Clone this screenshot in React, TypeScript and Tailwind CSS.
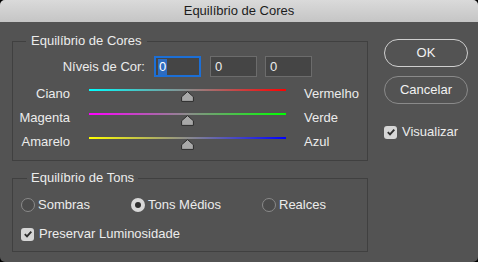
import React from "react";

const font = { fontFamily: '"Liberation Sans", Arial, sans-serif' };

const rows = [
  { left: "Ciano", right: "Vermelho", grad: "bg-[linear-gradient(to_right,#00ffff,#8c8c8c_50%,#ff0000)]" },
  { left: "Magenta", right: "Verde", grad: "bg-[linear-gradient(to_right,#ff00ff,#8c8c8c_50%,#00ff00)]" },
  { left: "Amarelo", right: "Azul", grad: "bg-[linear-gradient(to_right,#ffff00,#8c8c8c_50%,#0000ff)]" },
];

function Thumb() {
  return (
    <svg width="13" height="11" viewBox="0 0 13 11" className="block">
      <path d="M6.5 0.6 L12.4 5.8 V10.4 H0.6 V5.8 Z" fill="#a8a8a8" stroke="#2b2b2b" strokeWidth="1" strokeLinejoin="round" />
    </svg>
  );
}

function Check() {
  return (
    <span className="flex h-[13px] w-[13px] shrink-0 items-center justify-center rounded-[3px] bg-[#d6d6d6]">
      <svg width="10" height="10" viewBox="0 0 10 10">
        <path d="M1.8 5.2 L4 7.4 L8.3 2.6" fill="none" stroke="#2e2e2e" strokeWidth="1.9" />
      </svg>
    </span>
  );
}

function Radio({ on, label }: { on?: boolean; label: string }) {
  return (
    <div className="flex items-center gap-[3px]">
      {on ? (
        <span className="flex h-[14px] w-[14px] items-center justify-center rounded-full bg-[#d8d8d8]">
          <span className="h-[6px] w-[6px] rounded-full bg-[#2e2e2e]" />
        </span>
      ) : (
        <span className="h-[14px] w-[14px] rounded-full border border-[#8a8a8a] bg-[#4b4b4b]" />
      )}
      <span>{label}</span>
    </div>
  );
}

export default function App() {
  return (
    <div className="h-[262px] w-[478px] bg-black text-[13px] leading-[16px] text-[#ececec]" style={font}>
      <div className="flex h-full flex-col overflow-hidden rounded-[5px] bg-[#535353]">
        <div className="flex h-[22px] shrink-0 items-center justify-center bg-gradient-to-b from-[#dadada] to-[#c5c5c5] text-[#1c1c1c]">
          Equilíbrio de Cores
        </div>
        <div className="flex">
          <div className="ml-[12px] w-[356px]">
            <fieldset className="mt-[11px] h-[128px] border border-[#404040] p-0">
              <legend className="ml-[13px] px-[5px]">Equilíbrio de Cores</legend>
              <div className="mt-[7px] flex items-center">
                <span className="w-[132px] text-right">Níveis de Cor:</span>
                <div className="ml-[9px] flex h-[21px] w-[47px] items-center border-2 border-[#1c6fd6] bg-[#454545] pl-[2px]">
                  <span className="bg-[#2d6cc0] px-[1px] text-white">0</span>
                </div>
                <div className="ml-[9px] flex h-[21px] w-[47px] items-center border border-[#6c6c6c] bg-[#454545] pl-[4px]">0</div>
                <div className="ml-[8px] flex h-[21px] w-[47px] items-center border border-[#6c6c6c] bg-[#454545] pl-[4px]">0</div>
              </div>
              <div className="mt-[12px] flex flex-col">
                {rows.map((r) => (
                  <div key={r.left} className="flex h-[24px] items-start">
                    <span className="mt-[-3px] w-[57px] text-right">{r.left}</span>
                    <div className="ml-[19px] flex w-[197px] flex-col items-center">
                      <div className={`h-[2px] w-full ${r.grad}`} />
                      <Thumb />
                    </div>
                    <span className="mt-[-3px] ml-[18px]">{r.right}</span>
                  </div>
                ))}
              </div>
            </fieldset>
            <fieldset className="mt-[9px] h-[82px] border border-[#404040] p-0">
              <legend className="ml-[14px] px-[4px]">Equilíbrio de Tons</legend>
              <div className="mt-[11px] flex items-center pl-[8px]">
                <div className="w-[110px]"><Radio label="Sombras" /></div>
                <div className="w-[131px]"><Radio on label="Tons Médios" /></div>
                <Radio label="Realces" />
              </div>
              <div className="mt-[13px] flex items-center gap-[5px] pl-[8px]">
                <Check />
                <span>Preservar Luminosidade</span>
              </div>
            </fieldset>
          </div>
          <div className="ml-[16px] flex w-[84px] flex-col items-stretch pt-[17px]">
            <button className="h-[28px] rounded-full border-[1.5px] border-[#cfcfcf] text-[#f2f2f2]">OK</button>
            <button className="mt-[9px] h-[28px] rounded-full border border-[#8a8a8a] text-[#f2f2f2]">Cancelar</button>
            <div className="mt-[20px] flex items-center gap-[5px]">
              <Check />
              <span>Visualizar</span>
            </div>
          </div>
        </div>
      </div>
    </div>
  );
}
